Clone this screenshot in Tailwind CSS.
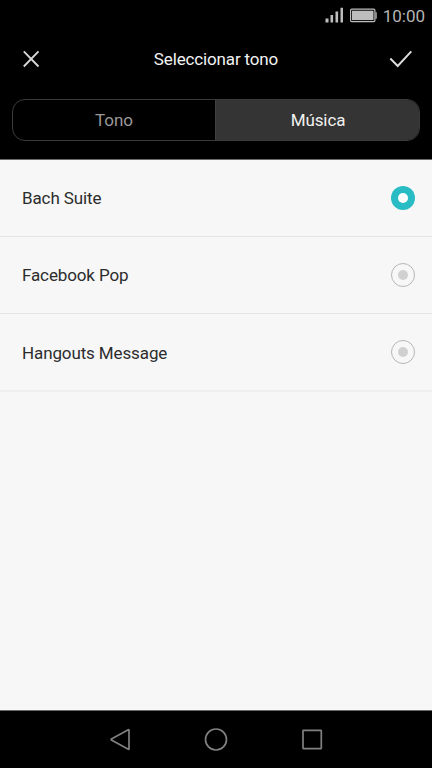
<!DOCTYPE html>
<html lang="es">
<head>
<meta charset="utf-8">
<title>Seleccionar tono</title>
<script src="https://cdn.jsdelivr.net/npm/@tailwindcss/browser@4"></script>
</head>
<body class="bg-black">
<div class="w-[432px] h-[768px] flex flex-col overflow-hidden bg-black font-[Roboto,sans-serif] text-[17px]">
  <header class="h-[160px] shrink-0 flex flex-col border-b border-[#6c6c6c]">
    <div class="h-8 shrink-0 flex items-center justify-end pr-[7px] text-[#b4b4b4]">
      <svg class="w-[52px] h-8 mr-[6px]" viewBox="325 0 52 32" fill="#bdbdbd">
        <path d="M325.500 18.500h3v4h-3zM330.500 15h2.600v7.500h-2.600zM335.500 11.500h2.600v11h-2.600zM340.500 7.800h2.500v14.700h-2.500z"/>
        <rect x="350.600" y="9.100" width="24.300" height="12.500" rx="1.200" fill="none" stroke="#bdbdbd" stroke-width="1.200"/>
        <rect x="352" y="10.700" width="21.500" height="9.400"/>
        <path d="M375.500 12.200h1.200v6.500h-1.200z"/>
      </svg>
      <span class="text-[17px] leading-8">10:00</span>
    </div>
    <div class="h-[54px] shrink-0 flex items-center justify-between pl-[22px] pr-[19px]">
      <svg class="w-[18px] h-[18px]" viewBox="0 0 18 18" fill="none" stroke="#d6d6d6" stroke-width="1.900"><path d="M1.800 1.300L16.500 16.500M16.500 1.300L1.800 16.500"/></svg>
      <h1 class="pl-[3px] text-[17px] leading-[54px] tracking-[-0.15px] text-[#f2f2f2]">Seleccionar tono</h1>
      <svg class="w-6 h-[18px]" viewBox="0 0 24 18" fill="none" stroke="#dedede" stroke-width="1.900"><path d="M1.300 8.500L8.700 16L22.300 1.300"/></svg>
    </div>
    <div class="mt-[13px] mx-3 h-[42px] shrink-0 flex rounded-[13px] border border-[#3a3a3a] overflow-hidden text-center leading-[41px]">
      <div class="w-[202px] text-[#999999]">Tono</div>
      <div class="flex-1 bg-[#343434] border-l border-[#404040] text-[#f0f0f0] tracking-[-0.1px] pl-px">Música</div>
    </div>
  </header>
  <main class="flex-1 bg-[#f7f7f7] text-[#2c2c2c] tracking-[-0.12px]">
    <div class="h-[77px] border-b border-[#e4e4e4] flex items-center justify-between pl-[22px] pr-[17px]">
      <span class="pt-px">Bach Suite</span>
      <span class="size-6 rounded-full bg-[#2abcc5] flex items-center justify-center"><span class="size-[10px] rounded-full bg-white"></span></span>
    </div>
    <div class="h-[77px] border-b border-[#e4e4e4] flex items-center justify-between pl-[22px] pr-[17px]">
      <span class="pt-[2px]">Facebook Pop</span>
      <span class="size-6 rounded-full border border-[#b5b5b5] flex items-center justify-center"><span class="size-[10px] rounded-full bg-[#d0d0d0]"></span></span>
    </div>
    <div class="h-[78px] border-b-2 border-[#efefef] flex items-center justify-between pl-[22px] pr-[17px]">
      <span class="pt-[3px]">Hangouts Message</span>
      <span class="size-6 rounded-full border border-[#b5b5b5] flex items-center justify-center"><span class="size-[10px] rounded-full bg-[#d0d0d0]"></span></span>
    </div>
  </main>
  <nav class="h-[58px] shrink-0 border-t border-[#6c6c6c] flex items-center justify-center gap-[72px]">
    <svg class="size-6" viewBox="0 0 24 24" fill="none" stroke="#808080" stroke-width="1.700" stroke-linejoin="round"><path d="M20.300 1.800Q21 1.500 21 2.300V20.700Q21 21.500 20.300 21.200L3.400 12Q2.800 11.500 3.400 11Z"/></svg>
    <svg class="size-6" viewBox="0 0 24 24" fill="none" stroke="#808080" stroke-width="1.700"><circle cx="12" cy="11.500" r="10.500"/></svg>
    <svg class="size-6" viewBox="0 0 24 24" fill="none" stroke="#808080" stroke-width="1.700"><rect x="3" y="2.300" width="18.300" height="18.300" rx=".5"/></svg>
  </nav>
</div>
</body>
</html>
